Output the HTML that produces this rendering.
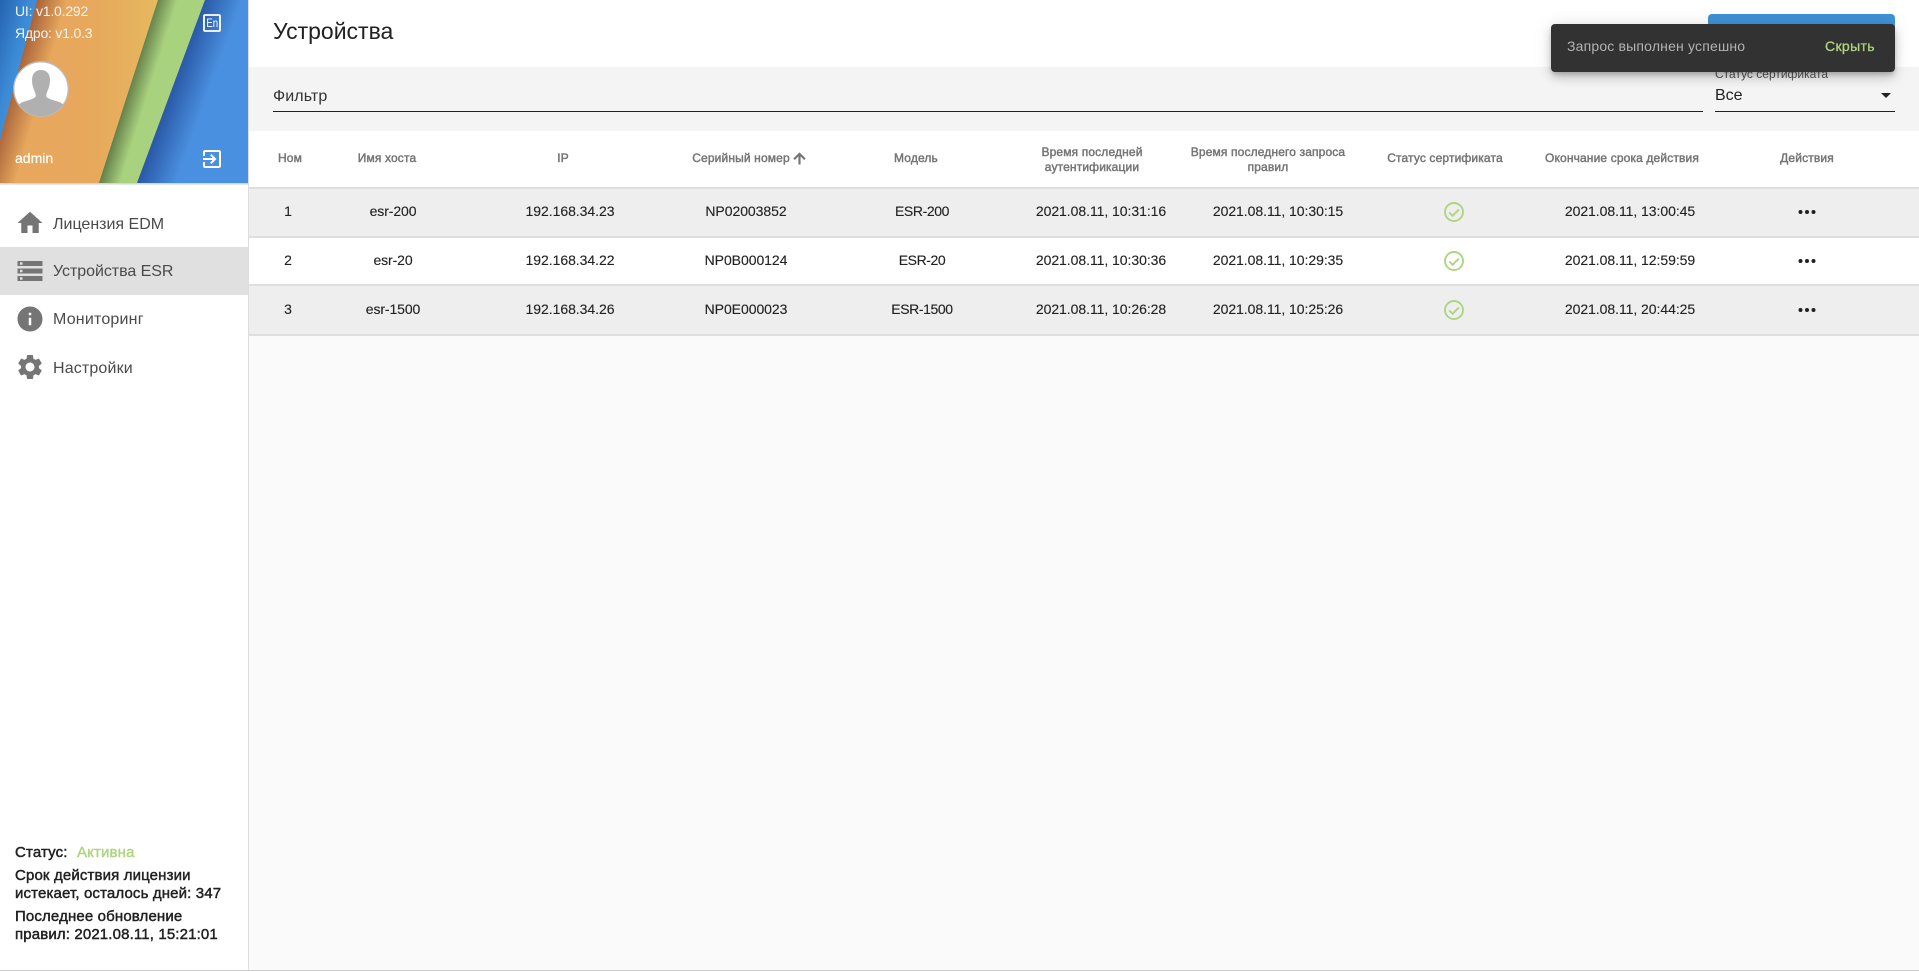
<!DOCTYPE html>
<html lang="ru"><head><meta charset="utf-8"><title>Устройства</title>
<style>
*{box-sizing:border-box}
html,body{margin:0;padding:0;width:1919px;height:971px;overflow:hidden;background:#fafafa;font-family:"Liberation Sans",sans-serif;color:#212121}
.a{position:absolute;white-space:nowrap}
.t{position:absolute;white-space:nowrap;height:20px;line-height:20px;margin-top:-10px}
.c{position:absolute;white-space:nowrap;width:300px;margin-left:-150px;text-align:center;height:20px;line-height:20px;margin-top:-10px;font-size:14px;letter-spacing:-.05px;-webkit-text-stroke:.12px #212121}
.h{font-size:12px;color:#757575;-webkit-text-stroke:.45px #757575;letter-spacing:.14px}
.h2{height:30px;margin-top:-15px;line-height:15px}
.row{position:absolute;left:249px;width:1670px;height:49px;border-bottom:2px solid #dedede}
.n{font-size:16px;color:#4a4a4a;left:53px}
.b{font-size:15px;color:#212121;left:15px;-webkit-text-stroke:.45px #212121;letter-spacing:.14px}
svg{position:absolute;display:block}
</style></head><body>

<!-- main -->
<div class="a" style="left:249px;top:0;width:1670px;height:67px;background:#fff"></div>
<div class="t" style="left:273px;top:31px;font-size:23px;color:#212121;letter-spacing:0">Устройства</div>
<div class="a" style="left:1708px;top:14px;width:187px;height:50px;background:#3f92d6;border-radius:4px"></div>

<div class="a" style="left:249px;top:67px;width:1670px;height:64px;background:#f4f4f4"></div>
<div class="t" style="left:273px;top:97px;font-size:16px;color:#333;letter-spacing:.1px">Фильтр</div>
<div class="a" style="left:273px;top:111px;width:1430px;height:1px;background:#222"></div>
<div class="t" style="left:1715px;top:74px;font-size:12px;color:#555">Статус сертификата</div>
<div class="t" style="left:1715px;top:96px;font-size:16px;color:#212121">Все</div>
<div class="a" style="left:1715px;top:111px;width:180px;height:1px;background:#222"></div>
<svg style="left:1881px;top:93px" width="11" height="6"><path d="M0 0h10L5 5z" fill="#222"/></svg>

<div class="a" style="left:249px;top:131px;width:1670px;height:56px;background:#fff"></div>
<div class="a" style="left:249px;top:187px;width:1670px;height:2px;background:#dedede"></div>
<div class="c h" style="left:290px;top:158px">Ном</div>
<div class="c h" style="left:387px;top:158px">Имя хоста</div>
<div class="c h" style="left:563px;top:158px">IP</div>
<div class="c h" style="left:741px;top:158px">Серийный номер</div>
<svg style="left:791px;top:150px" width="17" height="17" viewBox="0 0 24 24"><path d="M4 12l1.410 1.410L11 7.830V20h2V7.830l5.580 5.590L20 12l-8-8z" fill="#757575" stroke="#757575" stroke-width="1"/></svg>
<div class="c h" style="left:916px;top:158px">Модель</div>
<div class="c h h2" style="left:1092px;top:160px">Время последней<br>аутентификации</div>
<div class="c h h2" style="left:1268px;top:160px">Время последнего запроса<br>правил</div>
<div class="c h" style="left:1445px;top:158px">Статус сертификата</div>
<div class="c h" style="left:1622px;top:158px">Окончание срока действия</div>
<div class="c h" style="left:1807px;top:158px">Действия</div>

<div class="row" style="top:189px;background:#eee"></div>
<div class="row" style="top:238px;background:#fff;height:48px"></div>
<div class="row" style="top:286px;background:#eee;height:50px"></div>

<div class="c" style="left:288px;top:211px">1</div>
<div class="c" style="left:393px;top:211px;letter-spacing:-.1px">esr-200</div>
<div class="c" style="left:570px;top:211px">192.168.34.23</div>
<div class="c" style="left:746px;top:211px">NP02003852</div>
<div class="c" style="left:922px;top:211px;letter-spacing:-.4px">ESR-200</div>
<div class="c" style="left:1101px;top:211px">2021.08.11, 10:31:16</div>
<div class="c" style="left:1278px;top:211px">2021.08.11, 10:30:15</div>
<div class="c" style="left:1630px;top:211px">2021.08.11, 13:00:45</div>

<div class="c" style="left:288px;top:260px">2</div>
<div class="c" style="left:393px;top:260px;letter-spacing:-.1px">esr-20</div>
<div class="c" style="left:570px;top:260px">192.168.34.22</div>
<div class="c" style="left:746px;top:260px">NP0B000124</div>
<div class="c" style="left:922px;top:260px;letter-spacing:-.4px">ESR-20</div>
<div class="c" style="left:1101px;top:260px">2021.08.11, 10:30:36</div>
<div class="c" style="left:1278px;top:260px">2021.08.11, 10:29:35</div>
<div class="c" style="left:1630px;top:260px">2021.08.11, 12:59:59</div>

<div class="c" style="left:288px;top:309px">3</div>
<div class="c" style="left:393px;top:309px;letter-spacing:-.1px">esr-1500</div>
<div class="c" style="left:570px;top:309px">192.168.34.26</div>
<div class="c" style="left:746px;top:309px">NP0E000023</div>
<div class="c" style="left:922px;top:309px;letter-spacing:-.4px">ESR-1500</div>
<div class="c" style="left:1101px;top:309px">2021.08.11, 10:26:28</div>
<div class="c" style="left:1278px;top:309px">2021.08.11, 10:25:26</div>
<div class="c" style="left:1630px;top:309px">2021.08.11, 20:44:25</div>

<svg style="left:1444px;top:202px" width="20" height="20"><circle cx="10" cy="10" r="9" fill="none" stroke="#aed581" stroke-width="1.9"/><path d="M5.300 10.500l3.300 3.300 6.200-6.200" fill="none" stroke="#aed581" stroke-width="1.9"/></svg>
<svg style="left:1444px;top:251px" width="20" height="20"><circle cx="10" cy="10" r="9" fill="none" stroke="#aed581" stroke-width="1.9"/><path d="M5.300 10.500l3.300 3.300 6.200-6.200" fill="none" stroke="#aed581" stroke-width="1.9"/></svg>
<svg style="left:1444px;top:300px" width="20" height="20"><circle cx="10" cy="10" r="9" fill="none" stroke="#aed581" stroke-width="1.9"/><path d="M5.300 10.500l3.300 3.300 6.200-6.200" fill="none" stroke="#aed581" stroke-width="1.9"/></svg>

<svg style="left:1798px;top:208px" width="18" height="8" fill="#212121"><circle cx="2.500" cy="4" r="2"/><circle cx="9" cy="4" r="2"/><circle cx="15.500" cy="4" r="2"/></svg>
<svg style="left:1798px;top:257px" width="18" height="8" fill="#212121"><circle cx="2.500" cy="4" r="2"/><circle cx="9" cy="4" r="2"/><circle cx="15.500" cy="4" r="2"/></svg>
<svg style="left:1798px;top:306px" width="18" height="8" fill="#212121"><circle cx="2.500" cy="4" r="2"/><circle cx="9" cy="4" r="2"/><circle cx="15.500" cy="4" r="2"/></svg>

<!-- toast -->
<div class="a" style="left:1551px;top:24px;width:344px;height:48px;background:#323232;border-radius:4px;box-shadow:0 3px 5px -1px rgba(0,0,0,.2),0 6px 10px rgba(0,0,0,.14),0 1px 18px rgba(0,0,0,.12)"></div>
<div class="t" style="left:1567px;top:46px;font-size:14px;color:#b3b3b3;letter-spacing:.18px">Запрос выполнен успешно</div>
<div class="t" style="left:1825px;top:46px;font-size:14px;color:#aed581;-webkit-text-stroke:.3px #aed581;letter-spacing:.35px">Скрыть</div>

<!-- sidebar -->
<div class="a" style="left:0;top:0;width:249px;height:971px;background:#fff;border-right:1px solid #ddd"></div>
<svg style="left:0;top:0" width="248" height="183" viewBox="0 0 248 183">
<defs>
<linearGradient id="g1" gradientUnits="userSpaceOnUse" x1="0" y1="0" x2="70" y2="18"><stop offset="0" stop-color="#2563ad"/><stop offset=".4" stop-color="#3c8ad6"/><stop offset="1" stop-color="#4aa5e6"/></linearGradient>
<linearGradient id="g2" gradientUnits="userSpaceOnUse" x1="37" y1="0" x2="65" y2="8"><stop offset="0" stop-color="#a8623a"/><stop offset="1" stop-color="#e7a75c"/></linearGradient>
<linearGradient id="g2b" gradientUnits="userSpaceOnUse" x1="60" y1="0" x2="160" y2="0"><stop offset="0" stop-color="#e7a75c" stop-opacity="0"/><stop offset="1" stop-color="#e6bb5e"/></linearGradient>
<linearGradient id="g3" gradientUnits="userSpaceOnUse" x1="157" y1="0" x2="176" y2="6"><stop offset="0" stop-color="#65804a"/><stop offset="1" stop-color="#a9d27f"/></linearGradient>
<linearGradient id="g4" gradientUnits="userSpaceOnUse" x1="205" y1="0" x2="238" y2="12"><stop offset="0" stop-color="#2a5aa8"/><stop offset="1" stop-color="#4a90e0"/></linearGradient>
</defs>
<rect width="248" height="183" fill="#4c92e0"/>
<polygon points="0,0 37,0 0,140" fill="url(#g1)"/>
<polygon points="37,0 158,0 99,183 0,183 0,140" fill="url(#g2)"/>
<polygon points="37,0 158,0 99,183 0,183 0,140" fill="url(#g2b)"/>
<polygon points="158,0 205,0 137,183 99,183" fill="url(#g3)"/>
<polygon points="205,0 248,0 248,183 137,183" fill="url(#g4)"/>
</svg>
<div class="a" style="left:0;top:183px;width:248px;height:2px;background:linear-gradient(#ccc,#f2f2f2)"></div>

<div class="t" style="left:15px;top:11px;font-size:14px;color:#f3f3f3;letter-spacing:-.2px">UI: v1.0.292</div>
<div class="t" style="left:15px;top:33px;font-size:14px;color:#f3f3f3;letter-spacing:-.2px">Ядро: v1.0.3</div>
<div class="t" style="left:15px;top:158px;font-size:14px;color:#fff;-webkit-text-stroke:.15px #fff">admin</div>

<svg style="left:13px;top:61px" width="56" height="56" viewBox="0 0 56 56">
<defs><clipPath id="av"><circle cx="28" cy="28" r="27"/></clipPath></defs>
<circle cx="28" cy="28" r="27.2" fill="#fff" stroke="#bdbdbd" stroke-width="1.3"/>
<g clip-path="url(#av)"><path d="M28 9c-6 0-9 4-9 10 0 4 1 8 2.500 11 1 2.300 1.500 4 1 6-3 2.500-10 4-14 5.500L4 45l6 11h36l6-11-4.500-3.500c-4-1.500-11-3-14-5.500-.5-2 0-3.700 1-6C36 27 37 23 37 19c0-6-3-10-9-10z" fill="#b0b0b0"/></g>
</svg>

<svg style="left:203px;top:14px" width="18" height="18"><rect x="1" y="1" width="16" height="16" fill="none" stroke="#fff" stroke-width="1.8" rx="1"/></svg>
<div class="a" style="left:205px;top:14px;width:14px;height:18px;line-height:18px;text-align:center;font-size:12px;color:#fff;transform:scaleX(.8)">En</div>
<svg style="left:200px;top:147px" width="24" height="24" viewBox="0 0 24 24"><path d="M10.090 15.590L11.500 17l5-5-5-5-1.410 1.410L12.670 11H3v2h9.670l-2.580 2.590zM19 3H5c-1.110 0-2 .9-2 2v4h2V5h14v14H5v-4H3v4c0 1.100.89 2 2 2h14c1.100 0 2-.9 2-2V5c0-1.100-.9-2-2-2z" fill="#fff"/></svg>

<div class="a" style="left:0;top:247px;width:248px;height:48px;background:#e0e0e0"></div>

<svg style="left:15px;top:208px" width="30" height="30" viewBox="0 0 24 24" fill="#757575"><path d="M10 20v-6h4v6h5v-8h3L12 3 2 12h3v8z"/></svg>
<svg style="left:15px;top:256px" width="30" height="30" viewBox="0 0 24 24" fill="#757575"><path d="M2 20h20v-4H2v4zm2-3h2v2H4v-2zM2 4v4h20V4H2zm4 3H4V5h2v2zm-4 7h20v-4H2v4zm2-3h2v2H4v-2z"/></svg>
<svg style="left:15px;top:304px" width="30" height="30" viewBox="0 0 24 24" fill="#757575"><path d="M12 2C6.480 2 2 6.480 2 12s4.480 10 10 10 10-4.480 10-10S17.520 2 12 2zm1 15h-2v-6h2v6zm0-8h-2V7h2v2z"/></svg>
<svg style="left:15px;top:352px" width="30" height="30" viewBox="0 0 24 24" fill="#757575"><path d="M19.140 12.940c.04-.3.060-.61.060-.94 0-.32-.02-.64-.07-.94l2.030-1.580c.18-.14.230-.41.120-.61l-1.920-3.320c-.12-.22-.37-.29-.59-.22l-2.390.96c-.5-.38-1.030-.7-1.620-.94l-.36-2.540c-.04-.24-.24-.41-.48-.41h-3.840c-.24 0-.43.170-.47.410l-.36 2.540c-.59.240-1.130.57-1.620.94l-2.390-.96c-.22-.08-.47 0-.59.220L2.740 8.870c-.12.210-.08.470.12.610l2.030 1.580c-.05.3-.09.630-.09.940s.02.640.07.940l-2.030 1.580c-.18.140-.23.410-.12.610l1.920 3.320c.12.220.37.290.59.220l2.390-.96c.5.380 1.030.7 1.620.94l.36 2.540c.05.240.24.410.48.410h3.840c.24 0 .44-.17.470-.41l.36-2.540c.59-.24 1.130-.56 1.620-.94l2.390.96c.22.080.47 0 .59-.22l1.920-3.320c.12-.22.070-.47-.12-.61l-2.010-1.580zM12 15.600c-1.980 0-3.600-1.620-3.600-3.600s1.620-3.600 3.600-3.600 3.600 1.620 3.600 3.600-1.620 3.600-3.600 3.600z"/></svg>

<div class="t n" style="top:225px">Лицензия EDM</div>
<div class="t n" style="top:272px;letter-spacing:-.05px">Устройства ESR</div>
<div class="t n" style="top:320px;letter-spacing:.2px">Мониторинг</div>
<div class="t n" style="top:369px;letter-spacing:.15px">Настройки</div>

<div class="t b" style="top:853px">Статус:</div>
<div class="t b" style="left:77px;top:853px;color:#aed581;-webkit-text-stroke:.45px #aed581">Активна</div>
<div class="t b" style="top:876px">Срок действия лицензии</div>
<div class="t b" style="top:894px">истекает, осталось дней: 347</div>
<div class="t b" style="top:917px">Последнее обновление</div>
<div class="t b" style="top:935px">правил: 2021.08.11, 15:21:01</div>

<div class="a" style="left:0;top:970px;width:1919px;height:1px;background:#ccc"></div>
</body></html>
